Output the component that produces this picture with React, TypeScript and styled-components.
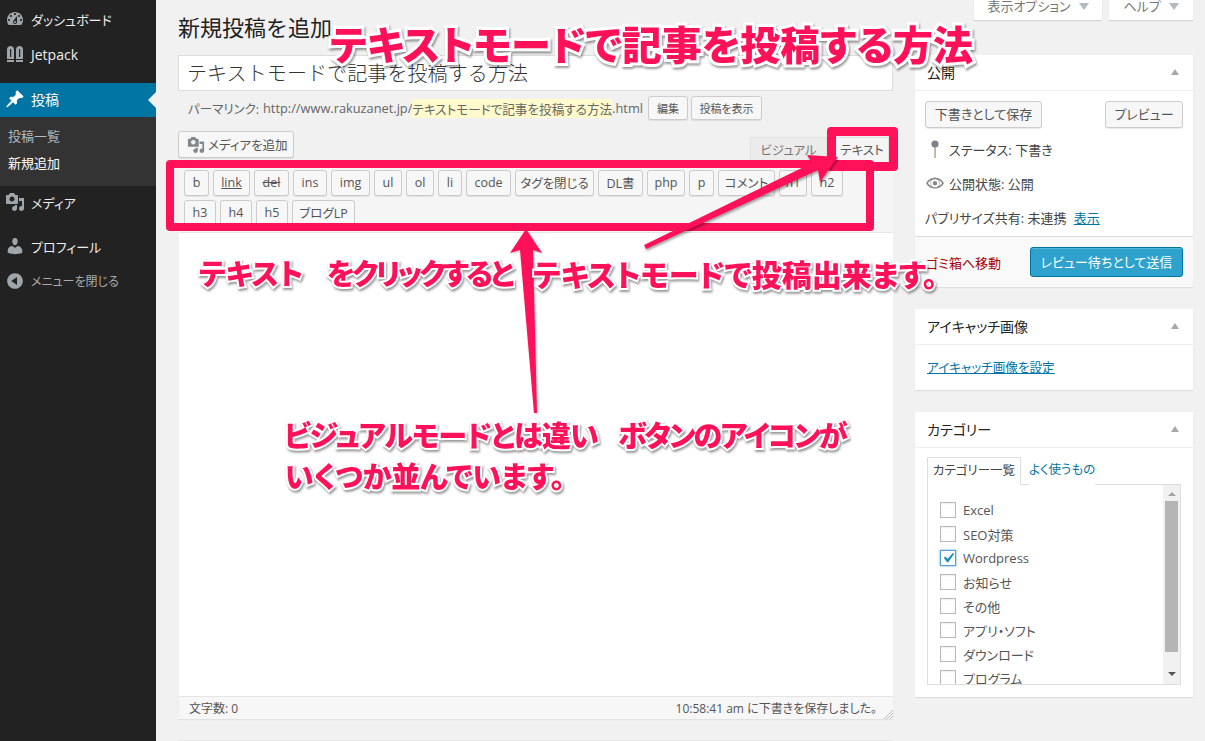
import React from 'react'
import styled, { createGlobalStyle } from 'styled-components'

const GlobalStyle = createGlobalStyle`
  html, body {
    margin: 0;
    padding: 0;
    background: #f1f1f1;
  }
  body {
    font-family: "Open Sans", "Noto Sans CJK JP", sans-serif;
    font-size: 13px;
    font-feature-settings: "palt";
    color: #444;
    overflow: hidden;
  }
  * {
    box-sizing: border-box;
  }
  button {
    font-feature-settings: "palt";
  }
`

const Page = styled.div`
  position: relative;
  display: flex;
  width: 1205px;
  height: 741px;
  overflow: hidden;
`

/* ---- admin menu ---- */
const Sidebar = styled.nav`
  width: 156px;
  flex: none;
  background: #222;
  padding-top: 3px;
`

const MenuItem = styled.div<{ $gap?: number; $current?: boolean; $dim?: boolean; $size?: number }>`
  position: relative;
  display: flex;
  align-items: center;
  gap: 6px;
  height: 34px;
  margin-top: ${p => p.$gap || 0}px;
  padding: 0 0 2px 5px;
  font-size: ${p => p.$size || 13}px;
  color: ${p => (p.$current ? '#fff' : p.$dim ? '#aaa' : '#eee')};
  background: ${p => (p.$current ? '#0074a2' : 'transparent')};
  svg {
    width: 20px;
    height: 20px;
    flex: none;
    fill: ${p => (p.$current ? '#fff' : '#a0a5aa')};
  }
  ${p =>
    p.$current &&
    `&::after {
      content: '';
      position: absolute;
      right: 0;
      top: 9px;
      border: 8px solid transparent;
      border-right-color: #f1f1f1;
      border-left-width: 0;
    }`}
`

const SubMenu = styled.div`
  background: #333;
  height: 69px;
  padding-top: 6px;
`

const SubItem = styled.div<{ $current?: boolean }>`
  height: 27px;
  line-height: 27px;
  padding-left: 8px;
  font-size: 13px;
  color: ${p => (p.$current ? '#fff' : '#b4b9be')};
`

/* ---- columns ---- */
const Main = styled.main`
  flex: 1;
  display: flex;
  gap: 22px;
  padding-left: 22px;
`

const EditorColumn = styled.div`
  width: 715px;
  flex: none;
`

const SideColumn = styled.aside`
  width: 278px;
  flex: none;
`

const Heading = styled.h1`
  margin: 0;
  height: 55px;
  padding-top: 11px;
  font-size: 22px;
  line-height: 32px;
  font-weight: 400;
  color: #222;
  font-feature-settings: "palt" 0;
`

const TitleInput = styled.div`
  height: 36px;
  padding-left: 8px;
  background: #fff;
  border: 1px solid #ddd;
  font-size: 20px;
  font-weight: 300;
  line-height: 36px;
  letter-spacing: 0.1px;
  color: #333;
  font-feature-settings: "palt" 0;
`

const PermalinkRow = styled.div`
  display: flex;
  align-items: center;
  height: 24px;
  margin-top: 5px;
  padding-left: 10px;
  font-size: 12.8px;
  color: #666;
`

const LinkLabel = styled.span`
  width: 75px;
  font-size: 12.5px;
`

const Highlight = styled.span`
  font-size: 12.6px;
  background: #fffbcc;
`

const SmallButton = styled.button<{ $w: number; $ml: number }>`
  width: ${p => p.$w}px;
  height: 24px;
  margin-left: ${p => p.$ml}px;
  padding: 0;
  font: inherit;
  font-size: 11px;
  color: #555;
  background: #f7f7f7;
  border: 1px solid #ccc;
  border-radius: 3px;
  box-shadow: 0 1px 0 rgba(0, 0, 0, 0.08);
`

const MediaRow = styled.div`
  display: flex;
  justify-content: space-between;
  height: 32px;
  margin-top: 11px;
`

const MediaButton = styled.button`
  display: flex;
  align-items: center;
  gap: 3px;
  width: 116px;
  height: 27px;
  padding: 0 0 0 8px;
  font: inherit;
  font-size: 12.5px;
  color: #555;
  background: #f7f7f7;
  border: 1px solid #ccc;
  border-radius: 3px;
  box-shadow: 0 1px 0 rgba(0, 0, 0, 0.08);
  svg {
    width: 18px;
    height: 18px;
    fill: #82878c;
  }
`

const ModeTabs = styled.div`
  display: flex;
  align-items: flex-end;
  gap: 8px;
  padding-right: 4px;
  height: 26px;
  margin-top: 6px;
`

const ModeTab = styled.div<{ $w: number; $active?: boolean }>`
  width: ${p => p.$w}px;
  height: 26px;
  font-size: 12.5px;
  line-height: 25px;
  text-align: center;
  color: ${p => (p.$active ? '#555' : '#777')};
  background: ${p => (p.$active ? '#f5f5f5' : '#ebebeb')};
  border: 1px solid #e2e2e2;
  border-bottom: none;
`

const Toolbar = styled.div`
  display: flex;
  flex-wrap: wrap;
  align-content: flex-start;
  gap: 4px;
  height: 69px;
  padding: 7px 40px 0 5px;
  margin-left: 1px;
  background: #f5f5f5;
`

const TagButton = styled.button<{ $w: number; $under?: boolean; $strike?: boolean }>`
  width: ${p => p.$w}px;
  height: 26px;
  padding: 0 0 1px;
  font: inherit;
  font-size: 12.5px;
  color: #555;
  text-decoration: ${p => (p.$under ? 'underline' : p.$strike ? 'line-through' : 'none')};
  background: #f7f7f7;
  border: 1px solid #ccc;
  border-radius: 3px;
  box-shadow: 0 1px 0 rgba(0, 0, 0, 0.08);
`

const EditorArea = styled.div`
  height: 464px;
  margin-left: 1px;
  background: #fff;
  border-top: 1px solid #e5e5e5;
`

const StatusBar = styled.div`
  display: flex;
  justify-content: space-between;
  align-items: center;
  position: relative;
  height: 23px;
  margin-left: 1px;
  padding: 0 16px 1px 10px;
  font-size: 12px;
  color: #555;
  background: #f7f7f7;
  border-top: 1px solid #e5e5e5;
  box-shadow: 0 1px 1px rgba(0, 0, 0, 0.06);
`

const ResizeGrip = styled.svg`
  position: absolute;
  right: 0;
  bottom: 0;
  width: 10px;
  height: 10px;
  stroke: #bbb;
`

const NextBox = styled.div`
  height: 10px;
  margin-top: 21px;
  background: #fff;
  border-top: 1px solid #e5e5e5;
`

/* ---- side boxes ---- */
const ScreenTabs = styled.div`
  display: flex;
  justify-content: flex-end;
  gap: 7px;
  height: 55px;
`

const ScreenTab = styled.div<{ $w: number }>`
  display: flex;
  justify-content: center;
  align-items: center;
  gap: 8px;
  width: ${p => p.$w}px;
  height: 20px;
  padding-bottom: 7px;
  font-size: 13px;
  line-height: 13px;
  color: #777;
  background: #fff;
  box-shadow: 0 1px 1px rgba(0, 0, 0, 0.12);
  &::after {
    content: '';
    border: 5px solid transparent;
    border-top: 7px solid #b4b9be;
    border-bottom: none;
  }
`

const Box = styled.section<{ $h: number }>`
  height: ${p => p.$h}px;
  margin-bottom: 22px;
  background: #fff;
  box-shadow: 0 1px 1px rgba(0, 0, 0, 0.08);
`

const BoxHeader = styled.h2`
  display: flex;
  justify-content: space-between;
  align-items: center;
  height: 36px;
  margin: 0;
  padding: 0 14px 2px 12px;
  font-size: 14px;
  font-weight: 400;
  color: #222;
  border-bottom: 1px solid #eee;
  &::after {
    content: '';
    border: 4px solid transparent;
    border-bottom: 6px solid #a8a8a8;
    border-top: none;
  }
`

const ButtonRow = styled.div`
  display: flex;
  justify-content: space-between;
  padding: 10px 10px 0;
`

const PlainButton = styled.button<{ $w: number }>`
  width: ${p => p.$w}px;
  height: 27px;
  padding: 0 0 2px;
  font: inherit;
  font-size: 13px;
  color: #555;
  background: #f7f7f7;
  border: 1px solid #ccc;
  border-radius: 3px;
  box-shadow: 0 1px 0 rgba(0, 0, 0, 0.08);
`

const MiscRow = styled.div<{ $top: number; $pad?: number }>`
  display: flex;
  align-items: center;
  gap: 4px;
  height: 20px;
  margin-top: ${p => p.$top}px;
  padding: 0 0 2px ${p => p.$pad || 10}px;
  font-size: 13px;
  color: #444;
  svg {
    width: 20px;
    height: 20px;
    flex: none;
    fill: #888;
  }
`

const Link = styled.a`
  color: #0074a2;
  text-decoration: underline;
`

const BoxFooter = styled.div`
  display: flex;
  justify-content: space-between;
  align-items: center;
  height: 51px;
  margin-top: 8px;
  padding: 0 10px 0 11px;
  background: #f9f9f9;
  border-top: 1px solid #ddd;
`

const TrashLink = styled.a`
  font-size: 13px;
  color: #a00;
`

const SubmitButton = styled.button`
  width: 153px;
  height: 30px;
  padding: 0 0 2px;
  font: inherit;
  font-size: 13px;
  color: #fff;
  background: #2ea2cc;
  border: 1px solid #0074a2;
  border-radius: 3px;
  box-shadow: inset 0 1px 0 rgba(120, 200, 230, 0.5);
`

const BoxBody = styled.div`
  padding: 12px 12px;
  font-size: 12.6px;
`

const CategoryBody = styled.div`
  padding: 8px 12px 0;
`

const CategoryTabs = styled.div`
  display: flex;
  align-items: flex-end;
  gap: 8px;
  height: 28px;
  font-size: 12.5px;
`

const CategoryTab = styled.div<{ $active?: boolean }>`
  height: 28px;
  width: ${p => (p.$active ? '94px' : 'auto')};
  line-height: 25px;
  text-align: center;
  color: ${p => (p.$active ? '#444' : '#0074a2')};
  background: #fff;
  border: ${p => (p.$active ? '1px solid #ddd' : 'none')};
  border-bottom: none;
  position: relative;
  top: 1px;
`

const CategoryList = styled.div`
  display: flex;
  width: 254px;
  height: 201px;
  border: 1px solid #ddd;
  overflow: hidden;
`

const CategoryItems = styled.div`
  flex: 1;
  padding: 13px 0 0 12px;
`

const CategoryRow = styled.label`
  display: flex;
  align-items: center;
  gap: 7px;
  height: 24px;
  font-size: 13px;
  color: #555;
`

const Check = styled.span<{ $on?: boolean }>`
  display: flex;
  justify-content: center;
  align-items: center;
  width: 16px;
  height: 16px;
  flex: none;
  background: #fff;
  border: 1px solid ${p => (p.$on ? '#5b9dd9' : '#b4b9be')};
  box-shadow: ${p => (p.$on ? '0 0 2px rgba(30, 140, 190, 0.8)' : 'inset 0 1px 2px rgba(0, 0, 0, 0.07)')};
  svg {
    width: 20px;
    height: 20px;
    flex: none;
    fill: #1e8cbe;
  }
`

const Scrollbar = styled.div`
  display: flex;
  flex-direction: column;
  align-items: center;
  justify-content: space-between;
  width: 17px;
  flex: none;
  padding: 7px 0 8px;
  background: #f1f1f1;
`

const ScrollArrow = styled.span<{ $down?: boolean }>`
  border: 4px solid transparent;
  ${p => (p.$down ? 'border-top: 4px solid #555; border-bottom: none;' : 'border-bottom: 4px solid #a3a3a3; border-top: none;')}
`

const ScrollThumb = styled.div`
  width: 13px;
  height: 151px;
  margin: 0 0 auto;
  position: relative;
  top: 5px;
  background: #b5b5b5;
`

/* ---- pink annotations painted over the screenshot ---- */
const Callout = styled.div<{ $x: number; $y: number; $size: number; $stroke: number; $spacing?: number }>`
  position: absolute;
  left: ${p => p.$x}px;
  top: ${p => p.$y}px;
  font-family: "Noto Sans CJK JP", sans-serif;
  font-size: ${p => p.$size}px;
  font-weight: 900;
  line-height: 1;
  letter-spacing: ${p => p.$spacing || 0}px;
  white-space: pre;
  color: #ff1159;
  -webkit-text-stroke: ${p => p.$stroke}px #fff;
  paint-order: stroke fill;
  filter: drop-shadow(1px 2px 1px rgba(0, 0, 0, 0.4));
`

const Frame = styled.div<{ $x: number; $y: number; $w: number; $h: number; $border: number }>`
  position: absolute;
  left: ${p => p.$x}px;
  top: ${p => p.$y}px;
  width: ${p => p.$w}px;
  height: ${p => p.$h}px;
  border: ${p => p.$border}px solid #ff1159;
  border-radius: 4px;
`

const ArrowLayer = styled.svg`
  position: absolute;
  left: 0;
  top: 0;
  width: 1205px;
  height: 741px;
  pointer-events: none;
  fill: #ff1159;
`

const icons = {
  dashboard:
    'M3.76 16h12.48c1.1-1.37 1.76-3.11 1.76-5 0-4.42-3.58-8-8-8s-8 3.58-8 8c0 1.89.66 3.63 1.76 5zM10 4c.55 0 1 .45 1 1s-.45 1-1 1-1-.45-1-1 .45-1 1-1zM6 6c.55 0 1 .45 1 1s-.45 1-1 1-1-.45-1-1 .45-1 1-1zm8 0c.55 0 1 .45 1 1s-.45 1-1 1-1-.45-1-1 .45-1 1-1zm-5.37 5.55L12 7v6c0 1.1-.9 2-2 2s-2-.9-2-2c0-.57.24-1.08.63-1.45zM4 10c.55 0 1 .45 1 1s-.45 1-1 1-1-.45-1-1 .45-1 1-1zm12 0c.55 0 1 .45 1 1s-.45 1-1 1-1-.45-1-1 .45-1 1-1zm-5 3c0-.55-.45-1-1-1s-1 .45-1 1 .45 1 1 1 1-.45 1-1z',
  pin:
    'M10.44 3.02l1.82-1.82 6.36 6.35-1.83 1.82c-1.05-.68-2.48-.57-3.41.36l-.75.75c-.92.93-1.04 2.35-.35 3.41l-1.83 1.82-2.41-2.41-2.8 2.79c-.42.42-3.38 2.71-3.8 2.29s1.86-3.39 2.28-3.81l2.79-2.79L4.1 9.36l1.83-1.82c1.05.69 2.48.57 3.41-.36l.75-.75c.93-.92 1.04-2.35.35-3.41z',
  media:
    'M13 11V4c0-.55-.45-1-1-1h-1.67L9 1H5L3.67 3H2c-.55 0-1 .45-1 1v7c0 .55.45 1 1 1h10c.55 0 1-.45 1-1zM7 4.5c1.38 0 2.5 1.12 2.5 2.5S8.38 9.5 7 9.5 4.5 8.38 4.5 7 5.62 4.5 7 4.5zM14 6h5v10.5c0 1.38-1.12 2.5-2.5 2.5S14 17.88 14 16.5s1.12-2.5 2.5-2.5c.17 0 .34.02.5.05V9h-3V6zm-4 8.05V13h2v3.5c0 1.38-1.12 2.5-2.5 2.5S7 17.88 7 16.5 8.12 14 9.5 14c.17 0 .34.02.5.05z',
  user:
    'M10 9.25c-2.27 0-2.73-3.44-2.73-3.44C7 4.02 7.82 2 9.97 2c2.16 0 2.98 2.02 2.71 3.81 0 0-.41 3.44-2.68 3.44zm0 2.57L12.72 10c2.39 0 4.52 2.33 4.52 4.53v2.49s-3.65 1.13-7.24 1.13c-3.65 0-7.24-1.13-7.24-1.13v-2.49c0-2.25 1.94-4.48 4.47-4.48z',
  collapse:
    'M10 2.16c4.33 0 7.84 3.51 7.84 7.84s-3.51 7.84-7.84 7.84S2.16 14.33 2.16 10 5.71 2.16 10 2.16zm2 11.72V6.12L6.18 9.97z',
  eye:
    'M10 4.6c-3.7 0-7 2.2-9 5.6 2 3.4 5.3 5.4 9 5.4s7-2 9-5.4c-2-3.4-5.300-5.600-9-5.600zM10 6.200a4 4 0 1 1 0 8 4 4 0 0 1 0-8zM2.900 10.200c1-1.400 2.200-2.400 3.700-3.100-.7.800-1.100 1.900-1.100 3.100s.4 2.200 1.100 3c-1.500-.7-2.700-1.700-3.700-3zM13.400 7.100c1.500.7 2.700 1.700 3.700 3.100-1 1.300-2.200 2.300-3.700 3 .7-.8 1.100-1.800 1.100-3s-.4-2.300-1.100-3.100zM10 8a2.200 2.200 0 1 0 0 4.400A2.200 2.200 0 0 0 10 8z',
}

const Icon = ({ d }: { d: string }) => (
  <svg viewBox="0 0 20 20" aria-hidden="true">
    <path d={d} fillRule="evenodd" />
  </svg>
)

// jetpack plugin icon, two little tanks side by side
const JetpackIcon = () => (
  <svg viewBox="0 0 20 20" aria-hidden="true">
    <path d="M2 5.500C2 3.500 3.500 2 5.500 2S9 3.500 9 5.500V15H2zM11 5.500C11 3.500 12.500 2 14.500 2S18 3.500 18 5.500V15h-7z" />
    <path d="M5 5h1.200v8H5zM14 5h1.200v8H14z" fill="#222" />
    <path d="M2 16h7v2H2zM11 16h7v2h-7z" />
  </svg>
)

const StatusPin = () => (
  <svg viewBox="0 0 20 20" aria-hidden="true">
    <rect x="9.300" y="7" width="1.500" height="12" fill="#b5a58a" />
    <circle cx="10" cy="5" r="3.600" fill="#7d8488" />
  </svg>
)

const tagButtons = [
  { label: 'b', w: 25 },
  { label: 'link', w: 37, under: true },
  { label: 'del', w: 35, strike: true },
  { label: 'ins', w: 34 },
  { label: 'img', w: 39 },
  { label: 'ul', w: 28 },
  { label: 'ol', w: 28 },
  { label: 'li', w: 24 },
  { label: 'code', w: 45 },
  { label: 'タグを閉じる', w: 79 },
  { label: 'DL書', w: 45 },
  { label: 'php', w: 38 },
  { label: 'p', w: 25 },
  { label: 'コメント', w: 57 },
  { label: 'h1', w: 28 },
  { label: 'h2', w: 32 },
  { label: 'h3', w: 32 },
  { label: 'h4', w: 32 },
  { label: 'h5', w: 32 },
  { label: 'ブログLP', w: 63 },
]

const categories = ['Excel', 'SEO対策', 'Wordpress', 'お知らせ', 'その他', 'アプリ・ソフト', 'ダウンロード', 'プログラム']

const App: React.FC = () => {
  return (
    <Page>
      <GlobalStyle />
      <Sidebar>
        <MenuItem>
          <Icon d={icons.dashboard} />
          ダッシュボード
        </MenuItem>
        <MenuItem $gap={1} $size={14}>
          <JetpackIcon />
          Jetpack
        </MenuItem>
        <MenuItem $gap={11} $current $size={14}>
          <Icon d={icons.pin} />
          投稿
        </MenuItem>
        <SubMenu>
          <SubItem>投稿一覧</SubItem>
          <SubItem $current>新規追加</SubItem>
        </SubMenu>
        <MenuItem>
          <Icon d={icons.media} />
          メディア
        </MenuItem>
        <MenuItem $gap={10}>
          <Icon d={icons.user} />
          プロフィール
        </MenuItem>
        <MenuItem $gap={1} $dim $size={12}>
          <Icon d={icons.collapse} />
          メニューを閉じる
        </MenuItem>
      </Sidebar>

      <Main>
        <EditorColumn>
          <Heading>新規投稿を追加</Heading>
          <TitleInput>テキストモードで記事を投稿する方法</TitleInput>
          <PermalinkRow>
            <LinkLabel>パーマリンク:</LinkLabel>
            http://www.rakuzanet.jp/
            <Highlight>テキストモードで記事を投稿する方法</Highlight>
            .html
            <SmallButton $w={40} $ml={5}>編集</SmallButton>
            <SmallButton $w={71} $ml={3}>投稿を表示</SmallButton>
          </PermalinkRow>
          <MediaRow>
            <MediaButton>
              <Icon d={icons.media} />
              メディアを追加
            </MediaButton>
            <ModeTabs>
              <ModeTab $w={77}>ビジュアル</ModeTab>
              <ModeTab $w={54} $active>テキスト</ModeTab>
            </ModeTabs>
          </MediaRow>
          <Toolbar>
            {tagButtons.map(b => (
              <TagButton key={b.label} $w={b.w} $under={b.under} $strike={b.strike}>
                {b.label}
              </TagButton>
            ))}
          </Toolbar>
          <EditorArea />
          <StatusBar>
            <span>文字数: 0</span>
            <span>10:58:41 am に下書きを保存しました。</span>
            <ResizeGrip viewBox="0 0 10 10">
              <path d="M10 1L1 10M10 4L4 10M10 7L7 10" />
            </ResizeGrip>
          </StatusBar>
          <NextBox />
        </EditorColumn>

        <SideColumn>
          <ScreenTabs>
            <ScreenTab $w={128}>表示オプション</ScreenTab>
            <ScreenTab $w={84}>ヘルプ</ScreenTab>
          </ScreenTabs>

          <Box $h={232}>
            <BoxHeader>公開</BoxHeader>
            <ButtonRow>
              <PlainButton $w={117}>下書きとして保存</PlainButton>
              <PlainButton $w={78}>プレビュー</PlainButton>
            </ButtonRow>
            <MiscRow $top={12}>
              <StatusPin />
              ステータス: 下書き
            </MiscRow>
            <MiscRow $top={14}>
              <Icon d={icons.eye} />
              公開状態: 公開
            </MiscRow>
            <MiscRow $top={14}>
              パブリサイズ共有: 未連携&nbsp;<Link>表示</Link>
            </MiscRow>
            <BoxFooter>
              <TrashLink>ゴミ箱へ移動</TrashLink>
              <SubmitButton>レビュー待ちとして送信</SubmitButton>
            </BoxFooter>
          </Box>

          <Box $h={81}>
            <BoxHeader>アイキャッチ画像</BoxHeader>
            <BoxBody>
              <Link>アイキャッチ画像を設定</Link>
            </BoxBody>
          </Box>

          <Box $h={285}>
            <BoxHeader>カテゴリー</BoxHeader>
            <CategoryBody>
              <CategoryTabs>
                <CategoryTab $active>カテゴリー一覧</CategoryTab>
                <CategoryTab>よく使うもの</CategoryTab>
              </CategoryTabs>
              <CategoryList>
                <CategoryItems>
                  {categories.map(c => (
                    <CategoryRow key={c}>
                      <Check $on={c === 'Wordpress'}>
                        {c === 'Wordpress' && (
                          <svg viewBox="0 0 20 20" aria-hidden="true">
                            <path d="M14.830 4.890l1.340.940-5.810 8.380H9.020L5.780 9.670l1.340-1.250 2.570 2.400z" />
                          </svg>
                        )}
                      </Check>
                      {c}
                    </CategoryRow>
                  ))}
                </CategoryItems>
                <Scrollbar>
                  <ScrollArrow />
                  <ScrollThumb />
                  <ScrollArrow $down />
                </Scrollbar>
              </CategoryList>
            </CategoryBody>
          </Box>
        </SideColumn>
      </Main>

      <Frame $x={166} $y={160} $w={708} $h={71} $border={8} />
      <Frame $x={827} $y={127} $w={71} $h={44} $border={9} />
      <ArrowLayer viewBox="0 0 1205 741" aria-hidden="true">
        <path
          d="M526 229L542 253 533 250 537 413 534 413 520 250 510 253z"
          style={{ filter: 'drop-shadow(1px 1px 1px rgba(0,0,0,.25))' }}
        />
        <path
          d="M644 245L812 163 807 155 838 157 820 182 818 170 646 249z"
          style={{ filter: 'drop-shadow(1px 2px 1px rgba(0,0,0,.35))' }}
        />
      </ArrowLayer>

      <Callout $x={330} $y={23} $size={40} $stroke={6}>テキストモードで記事を投稿する方法</Callout>
      <Callout $x={199} $y={258} $size={29} $stroke={4}>テキスト</Callout>
      <Callout $x={327} $y={258} $size={29} $stroke={4} $spacing={-2.7}>をクリックすると</Callout>
      <Callout $x={533} $y={258} $size={30} $stroke={4}>テキストモードで投稿出来ます。</Callout>
      <Callout $x={284} $y={420} $size={29} $stroke={4} $spacing={-0.8}>ビジュアルモードとは違い</Callout>
      <Callout $x={618} $y={420} $size={29} $stroke={4} $spacing={-2}>ボタンのアイコンが</Callout>
      <Callout $x={285} $y={461} $size={29} $stroke={4}>いくつか並んでいます。</Callout>
    </Page>
  )
}

export default App
